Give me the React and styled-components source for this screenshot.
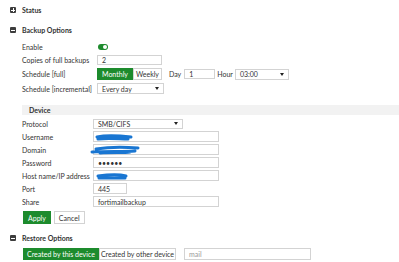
import React from "react";
import styled, { createGlobalStyle } from "styled-components";

const Global = createGlobalStyle`
  html, body { margin: 0; padding: 0; background: #fff; }
  body { font-family: Lato, "Open Sans", sans-serif; font-size: 7px; color: #333; }
  * { box-sizing: border-box; }
`;

const GREEN = "#1d8b2d";

const Page = styled.div`
  width: 399px;
  height: 262px;
  overflow: hidden;
  display: flex;
  flex-direction: column;
  padding-left: 10px;
`;

const Header = styled.div`
  display: flex;
  align-items: center;
  gap: 6px;
  height: ${(p) => p.$h || 20}px;
  margin-top: ${(p) => p.$mt || 0}px;
  font-weight: 700;
  color: #333;
`;

const Icon = styled.span`
  width: 6px;
  height: 6px;
  background: #3d3d3d;
  border-radius: 1px;
  position: relative;
  flex: none;
  &::before {
    content: "";
    position: absolute;
    left: 1px;
    right: 1px;
    top: 2.5px;
    height: 1px;
    background: #fff;
  }
  ${(p) =>
    p.$plus &&
    `&::after {
      content: "";
      position: absolute;
      top: 1px;
      bottom: 1px;
      left: 2.5px;
      width: 1px;
      background: #fff;
    }`}
`;

const Section = styled.div`
  display: flex;
  flex-direction: column;
  gap: ${(p) => p.$gap || 3}px;
  padding-left: 12px;
  margin-top: ${(p) => p.$mt || 0}px;
`;

const Row = styled.div`
  display: grid;
  grid-template-columns: ${(p) => p.$label || 75}px 1fr;
  align-items: center;
  height: ${(p) => p.$h || 11}px;
`;

const Label = styled.span`
  white-space: nowrap;
`;

const Controls = styled.div`
  display: flex;
  align-items: center;
  height: 100%;
`;

const Input = styled.div`
  width: ${(p) => p.$w}px;
  height: ${(p) => p.$h || 11}px;
  border: 1px solid #d3d3d3;
  background: #fff;
  display: flex;
  align-items: center;
  padding-left: 4px;
  color: ${(p) => (p.$placeholder ? "#999" : "#333")};
  margin-left: ${(p) => p.$ml || 0}px;
  position: relative;
  white-space: nowrap;
`;

const Select = styled(Input)`
  justify-content: space-between;
  padding-right: 4px;
  &::after {
    content: "";
    border-left: 2.5px solid transparent;
    border-right: 2.5px solid transparent;
    border-top: 3px solid #222;
  }
`;

const Toggle = styled.span`
  width: 10px;
  height: 6px;
  border-radius: 3px;
  background: ${GREEN};
  position: relative;
  margin-left: 1px;
  &::after {
    content: "";
    position: absolute;
    right: 1px;
    top: 1px;
    width: 4px;
    height: 4px;
    border-radius: 50%;
    background: #fff;
  }
`;

const Btn = styled.span`
  height: ${(p) => p.$h || 12}px;
  display: inline-flex;
  align-items: center;
  justify-content: center;
  padding: 0 ${(p) => p.$px ?? 3}px;
  border: 1px solid ${(p) => (p.$primary ? GREEN : "#d3d3d3")};
  background: ${(p) => (p.$primary ? GREEN : "#fff")};
  color: ${(p) => (p.$primary ? "#fff" : "#333")};
  white-space: nowrap;
  margin-left: ${(p) => p.$ml || 0}px;
`;

const Text = styled.span`
  margin-left: ${(p) => p.$ml || 0}px;
  margin-right: ${(p) => p.$mr || 0}px;
`;

const DeviceBar = styled.div`
  height: 10px;
  background: #f2f2f2;
  display: flex;
  align-items: center;
  padding-left: 7px;
  font-weight: 700;
  margin-top: 11px;
  margin-bottom: 1px;
`;

const ButtonRow = styled.div`
  display: flex;
  gap: 3px;
  margin-top: 2px;
  height: 13px;
  padding-left: 1px;
`;

const Scribble = styled.svg`
  position: absolute;
  left: ${(p) => p.$x}px;
  top: ${(p) => p.$y}px;
  overflow: visible;
`;

function Redact({ x, y, w, h, d }) {
  return (
    <Scribble $x={x} $y={y} width={w} height={h} viewBox={`0 0 ${w} ${h}`}>
      <path d={d} fill="none" stroke="#1976d2" strokeWidth="3" strokeLinecap="round" strokeLinejoin="round" />
    </Scribble>
  );
}

export default function App() {
  return (
    <>
      <Global />
      <Page>
        <Header><Icon $plus /> Status</Header>
        <Header><Icon /> Backup Options</Header>
        <Section $gap={3} $mt={2}>
          <Row $h={10}>
            <Label>Enable</Label>
            <Controls><Toggle /></Controls>
          </Row>
          <Row $h={10}>
            <Label>Copies of full backups</Label>
            <Controls><Input $w={65} $h={10}>2</Input></Controls>
          </Row>
          <Row $h={12}>
            <Label>Schedule [full]</Label>
            <Controls>
              <Btn $primary $px={4}>Monthly</Btn>
              <Btn $px={2}>Weekly</Btn>
              <Text $ml={7} $mr={3}>Day</Text>
              <Input $w={31} $h={10}>1</Input>
              <Text $ml={2} $mr={2}>Hour</Text>
              <Select $w={54} $h={11}>03:00</Select>
            </Controls>
          </Row>
          <Row $h={11}>
            <Label>Schedule [incremental]</Label>
            <Controls><Select $w={67}>Every day</Select></Controls>
          </Row>
        </Section>
        <Section $gap={2}>
          <DeviceBar>Device</DeviceBar>
          <Row $label={71}>
            <Label>Protocol</Label>
            <Controls><Select $w={90} $h={10}>SMB/CIFS</Select></Controls>
          </Row>
          <Row $label={71}>
            <Label>Username</Label>
            <Controls>
              <Input $w={126}>
                <Redact x={0} y={2} w={40} h={7} d="M3 3 C12 1, 28 2, 37 3 M4 5 C14 4, 26 5, 34 5" />
              </Input>
            </Controls>
          </Row>
          <Row $label={71}>
            <Label>Domain</Label>
            <Controls>
              <Input $w={126}>
                <Redact x={-4} y={1} w={52} h={9} d="M6 3 C18 1, 36 1, 48 2 M2 6 C16 5, 34 6, 45 5 M10 7 C22 6, 34 7, 40 6" />
              </Input>
            </Controls>
          </Row>
          <Row $label={71}>
            <Label>Password</Label>
            <Controls><Input $w={126}>••••••</Input></Controls>
          </Row>
          <Row $label={71}>
            <Label>Host name/IP address</Label>
            <Controls>
              <Input $w={126}>
                <Redact x={1} y={2} w={34} h={7} d="M3 3 C10 2, 24 1, 31 3 M4 5 C12 5, 24 5, 30 5" />
              </Input>
            </Controls>
          </Row>
          <Row $label={71}>
            <Label>Port</Label>
            <Controls><Input $w={34}>445</Input></Controls>
          </Row>
          <Row $label={71}>
            <Label>Share</Label>
            <Controls><Input $w={126}>fortimailbackup</Input></Controls>
          </Row>
          <ButtonRow>
            <Btn $primary $h={13} $px={4}>Apply</Btn>
            <Btn $h={13} $px={4}>Cancel</Btn>
          </ButtonRow>
        </Section>
        <Header $h={20} $mt={4}><Icon /> Restore Options</Header>
        <Section>
          <Controls>
            <Btn $primary $px={3} $ml={1}>Created by this device</Btn>
            <Btn $px={1}>Created by other device</Btn>
            <Input $w={127} $h={12} $ml={8} $placeholder>mail</Input>
          </Controls>
        </Section>
      </Page>
    </>
  );
}
